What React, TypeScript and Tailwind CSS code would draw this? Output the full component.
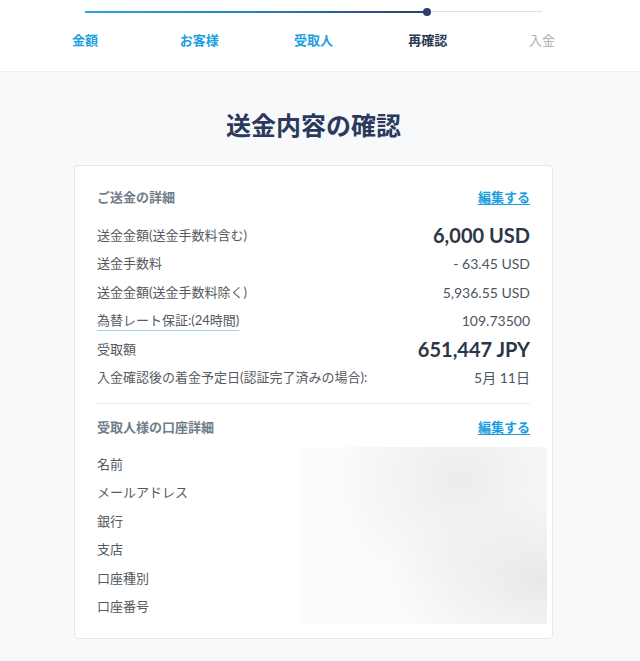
import React from 'react';

const steps = [
  { label: '金額', state: 'done' },
  { label: 'お客様', state: 'done' },
  { label: '受取人', state: 'done' },
  { label: '再確認', state: 'current' },
  { label: '入金', state: 'todo' },
];

const remitRows = [
  { label: '送金金額(送金手数料含む)', value: '6,000 USD', big: true },
  { label: '送金手数料', value: '- 63.45 USD' },
  { label: '送金金額(送金手数料除く)', value: '5,936.55 USD' },
  { label: '為替レート保証:(24時間)', value: '109.73500', link: true },
  { label: '受取額', value: '651,447 JPY', big: true },
  { label: '入金確認後の着金予定日(認証完了済みの場合):', value: '5月 11日' },
];

const accountRows = ['名前', 'メールアドレス', '銀行', '支店', '口座種別', '口座番号'];

function SectionHeader({ title }: { title: string }) {
  return (
    <div className="flex items-center justify-between h-5">
      <span className="text-[13px] font-bold text-[#6f7d8a]">{title}</span>
      <a className="text-[13px] font-bold text-[#1a9ee0] underline underline-offset-2 cursor-pointer">
        編集する
      </a>
    </div>
  );
}

export default function App() {
  return (
    <div
      className="min-h-[661px] bg-[#f8f9fa]"
      style={{ fontFamily: 'Lato, "Noto Sans CJK JP", sans-serif' }}
    >
      {/* Stepper */}
      <div className="h-[72px] bg-white border-b border-[#eceff1]">
        <div className="ml-[28px] w-[571px] pt-[10px]">
          <div className="mx-[57px] flex items-center h-[3px]">
            <div className="w-[342px] h-[2px] bg-gradient-to-r from-[#2aa8e0] via-[#2a7fc0] to-[#2c3e6a]" />
            <div className="w-[8px] h-[8px] rounded-full bg-[#2c3e6a] -ml-[4px] shrink-0" />
            <div className="flex-1 h-[1px] bg-[#dfe3e6]" />
          </div>
          <div className="grid grid-cols-5 mt-[18px]">
            {steps.map((s) => (
              <div
                key={s.label}
                className={`text-center text-[13px] ${
                  s.state === 'done'
                    ? 'font-bold text-[#1ba0e2]'
                    : s.state === 'current'
                    ? 'font-bold text-[#2c3a55]'
                    : 'text-[#a9adb1]'
                }`}
              >
                {s.label}
              </div>
            ))}
          </div>
        </div>
      </div>

      <div className="w-[627px]">
        <h1 className="text-center text-[25px] font-bold text-[#2b3a5c] mt-[36px] leading-[34px]">
          送金内容の確認
        </h1>

        {/* Card */}
        <div className="relative mx-auto mt-[23px] w-[479px] bg-white border border-[#e4e7ea] rounded-[4px] px-[22px] pt-[22px] pb-[17px]">
          <SectionHeader title="ご送金の詳細" />
          <div className="mt-[13px]">
            {remitRows.map((r) => (
              <div key={r.label} className="flex items-center justify-between h-[28.5px]">
                <span
                  className={`text-[13px] text-[#555a60] ${
                    r.link ? 'underline decoration-[#9dd4ef] underline-offset-[5px]' : ''
                  }`}
                >
                  {r.label}
                </span>
                <span
                  className={
                    r.big
                      ? 'text-[20px] font-bold text-[#2b3648]'
                      : 'text-[14px] text-[#4d5563]'
                  }
                >
                  {r.value}
                </span>
              </div>
            ))}
          </div>

          <div className="mt-[11px] border-t border-[#e8ebee]" />

          <div className="pt-[14px]">
            <SectionHeader title="受取人様の口座詳細" />
            <div className="mt-[12px]">
              {accountRows.map((l) => (
                <div key={l} className="flex items-center h-[28.5px]">
                  <span className="text-[13px] text-[#555a60]">{l}</span>
                </div>
              ))}
            </div>
          </div>

          {/* blurred values */}
          <div className="absolute left-[224px] top-[281px] w-[248px] h-[177px] bg-[#fafbfb] overflow-hidden">
            <div className="absolute inset-0 bg-[radial-gradient(ellipse_at_65%_18%,#eaecee_0%,rgba(250,251,251,0)_55%)]" />
            <div className="absolute inset-0 bg-[radial-gradient(ellipse_at_100%_75%,#e6e8ea_0%,rgba(250,251,251,0)_45%)]" />
            <div className="absolute inset-0 bg-gradient-to-r from-[#fcfcfc] to-transparent w-[60px]" />
          </div>
        </div>
      </div>
    </div>
  );
}
